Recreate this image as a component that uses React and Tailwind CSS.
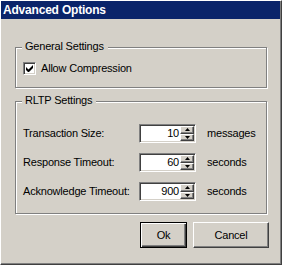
function Group({ title, className = '', children }) {
  return (
    <div
      className={`relative ml-[14px] w-[252px] border border-[#808080] shadow-[inset_1px_1px_0_#fff,1px_1px_0_#fff] ${className}`}
    >
      <span className="absolute left-[6px] top-[-8px] bg-[#d4d0c8] pl-[3px] pr-[4px] leading-[13px]">
        {title}
      </span>
      {children}
    </div>
  )
}

function Checkbox() {
  return (
    <span className="flex h-[13px] w-[13px] items-center justify-center border border-b-white border-l-[#808080] border-r-white border-t-[#808080] bg-white shadow-[inset_1px_1px_0_#404040,inset_-1px_-1px_0_#d4d0c8]">
      <svg width="7" height="7" viewBox="0 0 7 7" className="block">
        <path d="M0 2v3l2 2h1l4-4V0L2.5 4.5z" fill="#000" />
      </svg>
    </span>
  )
}

function SpinButton({ up }) {
  return (
    <span className="flex flex-1 items-center justify-center border border-b-[#404040] border-l-white border-r-[#404040] border-t-white bg-[#d4d0c8] shadow-[inset_-1px_-1px_0_#808080]">
      <svg width="5" height="3" viewBox="0 0 5 3" className="block">
        <path d={up ? 'M2.5 0L5 3H0z' : 'M0 0h5L2.5 3z'} fill="#000" />
      </svg>
    </span>
  )
}

function Spin({ value }) {
  return (
    <div className="flex h-[19px] w-[57px] border border-b-white border-l-[#808080] border-r-white border-t-[#808080] bg-white p-px shadow-[inset_1px_1px_0_#404040,inset_-1px_-1px_0_#d4d0c8]">
      <span className="flex-1 pr-[1px] text-right leading-[15px]">{value}</span>
      <span className="flex w-[14px] flex-col">
        <SpinButton up />
        <SpinButton />
      </span>
    </div>
  )
}

const rows = [
  { label: 'Transaction Size:', value: 10, unit: 'messages' },
  { label: 'Response Timeout:', value: 60, unit: 'seconds' },
  { label: 'Acknowledge Timeout:', value: 900, unit: 'seconds' },
]

export default function App() {
  return (
    <div className="h-[265px] w-[282px] border border-b-[#404040] border-l-white border-r-[#404040] border-t-white bg-[#d4d0c8] font-['Liberation_Sans',Arial,sans-serif] text-[11px] tracking-[-0.2px] text-black">
      <div className="h-full border-b border-r border-[#808080]">
        <div className="h-[18px] bg-[#0a246a] pl-[2px] text-[12px] font-bold leading-[18px] text-white">
          Advanced Options
        </div>

        <Group title="General Settings" className="mt-[28px] h-[41px]">
          <label className="flex items-center gap-[5px] pl-[7px] pt-[14px]">
            <Checkbox />
            <span className="leading-[13px]">Allow Compression</span>
          </label>
        </Group>

        <Group title="RLTP Settings" className="mt-[13px] h-[113px]">
          <div className="grid grid-cols-[116px_57px_auto] items-center gap-y-[10px] pl-[7px] pt-[22px]">
            {rows.map((r) => (
              <div key={r.label} className="contents">
                <span>{r.label}</span>
                <Spin value={r.value} />
                <span className="pl-[11px]">{r.unit}</span>
              </div>
            ))}
          </div>
        </Group>

        <div className="ml-[14px] mt-[8px] flex w-[254px] justify-end gap-[6px]">
          <button className="h-[26px] w-[47px] border border-black shadow-[inset_1px_1px_0_#fff,inset_-1px_-1px_0_#404040,inset_-2px_-2px_0_#808080]">
            Ok
          </button>
          <button className="h-[26px] w-[76px] border border-b-[#404040] border-l-white border-r-[#404040] border-t-white shadow-[inset_-1px_-1px_0_#808080]">
            Cancel
          </button>
        </div>
      </div>
    </div>
  )
}
